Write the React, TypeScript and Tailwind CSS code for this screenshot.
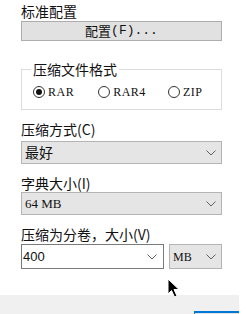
import React from "react";

const cjk = { fontFamily: '"Noto Sans CJK SC", "Noto Sans", sans-serif' };
const mono = { fontFamily: '"Liberation Mono", "Noto Sans CJK SC", monospace' };
const serif = { fontFamily: '"Liberation Serif", "Noto Sans CJK SC", serif' };

function Chevron() {
  return (
    <svg width="10" height="6" viewBox="0 0 10 6" className="shrink-0">
      <polyline points="0.5,0.5 5,5 9.5,0.5" fill="none" stroke="#606060" strokeWidth="1" />
    </svg>
  );
}

function Radio({ checked, label, className = "" }: { checked?: boolean; label: string; className?: string }) {
  return (
    <div className={"flex items-center gap-[3px] " + className}>
      <div className="w-[12px] h-[12px] rounded-full border border-[#333] flex items-center justify-center bg-white">
        {checked && <div className="w-[6px] h-[6px] rounded-full bg-[#111]" />}
      </div>
      <span className="text-[12px] leading-[14px] tracking-[0.5px] text-[#111]" style={serif}>
        {label}
      </span>
    </div>
  );
}

function Label({ children, className = "" }: { children: React.ReactNode; className?: string }) {
  return (
    <div className={"h-[17px] text-[14px] leading-[17px] text-[#111] " + className} style={cjk}>
      {children}
    </div>
  );
}

export default function App() {
  return (
    <div className="relative w-[252px] h-[314px] overflow-hidden bg-white flex flex-col">
      <div className="pl-[21px] w-[222px] flex flex-col">
        <Label className="mt-[3px]">标准配置</Label>
        <div className="mt-[1px] h-[20px] bg-[#e1e1e1] border border-[#adadad] flex items-center justify-center text-[13px] text-[#111]">
          <span style={cjk}>配置</span>
          <span style={mono}>(F)...</span>
        </div>

        <div className="relative mt-[28px] h-[41px] border border-[#dcdcdc] flex items-center pl-[11px]">
          <span
            className="absolute left-[9px] top-[-9px] bg-white px-[2px] text-[14px] leading-[17px] text-[#111]"
            style={cjk}
          >
            压缩文件格式
          </span>
          <div className="flex items-center mt-[5px]">
            <Radio checked label="RAR" />
            <Radio label="RAR4" className="ml-[24px]" />
            <Radio label="ZIP" className="ml-[22px]" />
          </div>
        </div>

        <Label className="mt-[11px]">压缩方式(C)</Label>
        <div className="mt-[3px] h-[23px] bg-[#e5e5e5] border border-[#b4b4b4] flex items-center justify-between pl-[3px] pr-[5px]">
          <span className="text-[14px] text-[#111]" style={cjk}>最好</span>
          <Chevron />
        </div>

        <Label className="mt-[11px]">字典大小(I)</Label>
        <div className="h-[23px] bg-[#e5e5e5] border border-[#b4b4b4] flex items-center justify-between pl-[3px] pr-[5px]">
          <span className="text-[13px] text-[#111]" style={serif}>64 MB</span>
          <Chevron />
        </div>

        <Label className="mt-[11px]">压缩为分卷，大小(V)</Label>
        <div className="mt-[1px] flex gap-[5px]">
          <div className="w-[143px] h-[25px] bg-white border border-[#7a7a7a] flex items-center justify-between pl-[1px] pr-[6px]">
            <span className="text-[13px] text-[#111]" style={{ fontFamily: '"Liberation Sans", sans-serif' }}>400</span>
            <Chevron />
          </div>
          <div className="w-[53px] h-[25px] bg-[#e5e5e5] border border-[#b4b4b4] flex items-center justify-between pl-[3px] pr-[5px]">
            <span className="text-[12px] text-[#111]" style={serif}>MB</span>
            <Chevron />
          </div>
        </div>
      </div>

      <div className="mt-[26px] w-[239px] h-[19px] bg-[#f0f0f0] flex items-end">
        <div className="ml-[194px] w-[45px] h-[3px] border-t-2 border-l border-[#0078d7] bg-[#e1e1e1]" />
      </div>

      <svg className="absolute left-[167px] top-[278px]" width="14" height="21" viewBox="0 0 14 21">
        <path
          d="M1 1 L1 16 L4.5 12.5 L7.5 19 L10 18 L7 11.5 L12 11.5 Z"
          fill="#000"
          stroke="#fff"
          strokeWidth="1"
          strokeLinejoin="round"
        />
      </svg>
    </div>
  );
}
